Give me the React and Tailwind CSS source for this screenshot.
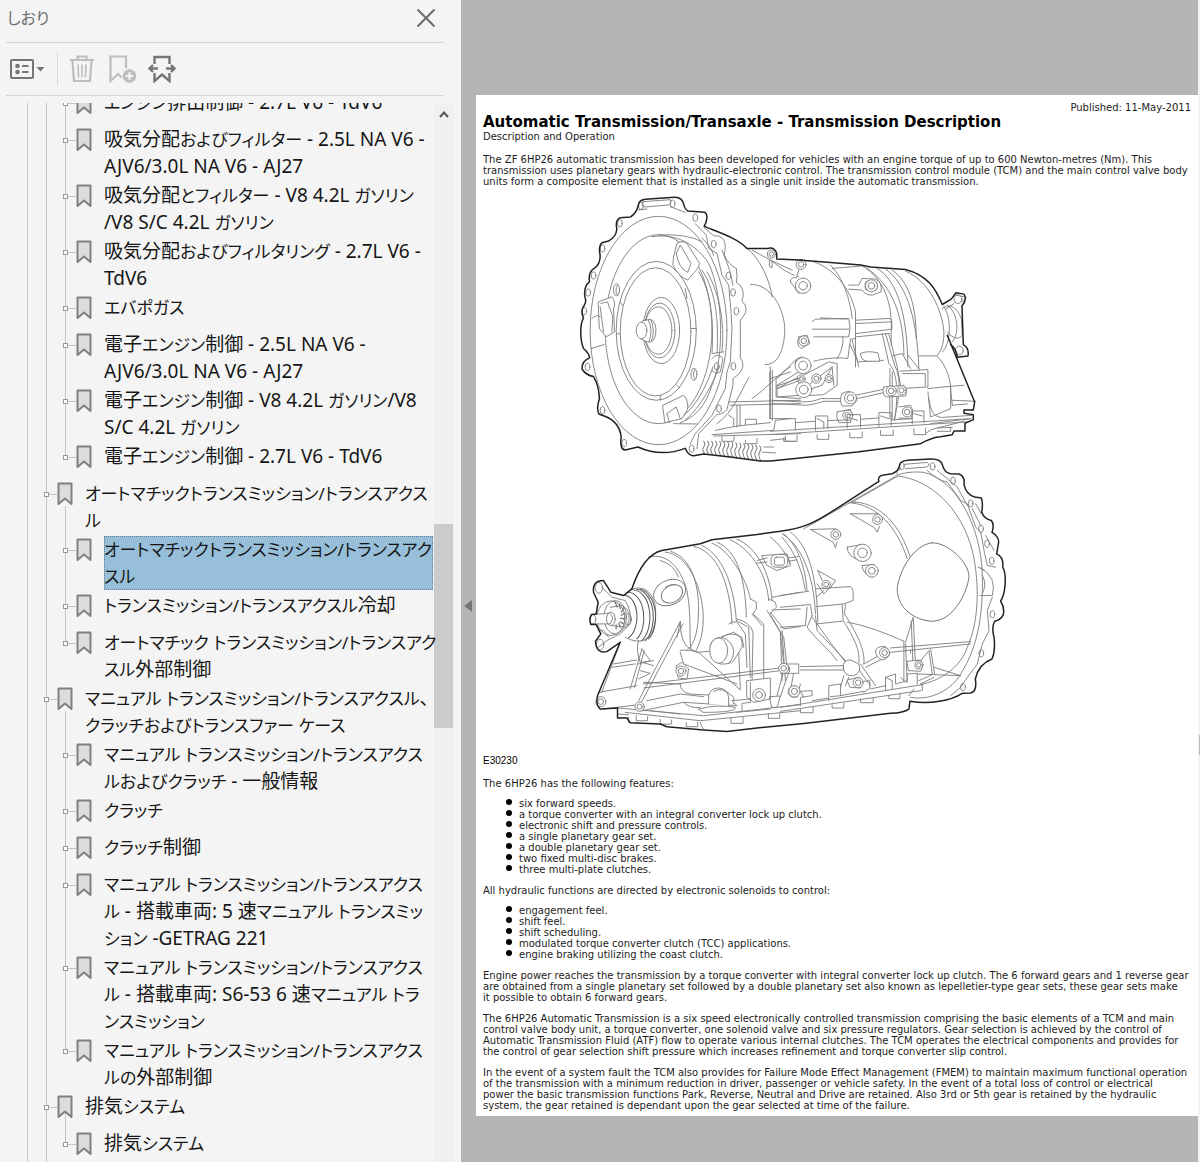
import { Fragment } from 'react';

const bookmarks = [
  {
    id: 'engine',
    children: [
      { lines: ['エンジン排出制御 - 2.7L V6 - TdV6'] },
      { lines: ['吸気分配およびフィルター - 2.5L NA V6 -', 'AJV6/3.0L NA V6 - AJ27'] },
      { lines: ['吸気分配とフィルター - V8 4.2L ガソリン', '/V8 S/C 4.2L ガソリン'] },
      { lines: ['吸気分配およびフィルタリング - 2.7L V6 -', 'TdV6'] },
      { lines: ['エバポガス'] },
      { lines: ['電子エンジン制御 - 2.5L NA V6 -', 'AJV6/3.0L NA V6 - AJ27'] },
      { lines: ['電子エンジン制御 - V8 4.2L ガソリン/V8', 'S/C 4.2L ガソリン'] },
      { lines: ['電子エンジン制御 - 2.7L V6 - TdV6'] },
    ],
  },
  {
    id: 'automatic',
    lines: ['オートマチックトランスミッション/トランスアクス', 'ル'],
    children: [
      { lines: ['オートマチックトランスミッション/トランスアク', 'スル'], selected: true },
      { lines: ['トランスミッション/トランスアクスル冷却'] },
      { lines: ['オートマチック トランスミッション/トランスアク', 'スル外部制御'] },
    ],
  },
  {
    id: 'manual',
    lines: ['マニュアル トランスミッション/トランスアクスル、', 'クラッチおよびトランスファー ケース'],
    children: [
      { lines: ['マニュアル トランスミッション/トランスアクス', 'ルおよびクラッチ - 一般情報'] },
      { lines: ['クラッチ'] },
      { lines: ['クラッチ制御'] },
      { lines: ['マニュアル トランスミッション/トランスアクス', 'ル - 搭載車両: 5 速マニュアル トランスミッ', 'ション -GETRAG 221'] },
      { lines: ['マニュアル トランスミッション/トランスアクス', 'ル - 搭載車両: S6-53 6 速マニュアル トラ', 'ンスミッション'] },
      { lines: ['マニュアル トランスミッション/トランスアクス', 'ルの外部制御'] },
    ],
  },
  {
    id: 'exhaust',
    lines: ['排気システム'],
    children: [{ lines: ['排気システム'] }],
  },
];

const features = [
  'six forward speeds.',
  'a torque converter with an integral converter lock up clutch.',
  'electronic shift and pressure controls.',
  'a single planetary gear set.',
  'a double planetary gear set.',
  'two fixed multi-disc brakes.',
  'three multi-plate clutches.',
];

const controls = [
  'engagement feel.',
  'shift feel.',
  'shift scheduling.',
  'modulated torque converter clutch (TCC) applications.',
  'engine braking utilizing the coast clutch.',
];

const Label = ({ text }) =>
  text.split(/([\u3040-\u30ff]+(?:[ /][\u3040-\u30ff]+)*)/).map((part, i) =>
    i % 2 ? <span key={i} className="text-[17px]">{part}</span> : <Fragment key={i}>{part}</Fragment>
  );

const BookmarkIcon = () => (
  <svg width="16" height="24" viewBox="0 0 16 24" className="shrink-0">
    <path d="M1.5 1.5h13v20.500L8 16.500 1.500 22z" fill="#dcdcdc" stroke="#808080" strokeWidth="2" strokeLinejoin="round" />
  </svg>
);

const Row = ({ item }) => (
  <div className="relative z-10 flex min-h-[37px] items-start pb-[2px]">
    <span className="absolute left-[2px] top-[14px] h-px w-[11px] bg-[#c4c4c4]" />
    <span className="relative mt-[12px] h-[5px] w-[5px] shrink-0 border border-[#999] bg-white" />
    <span className="ml-[8px] mt-[2px] shrink-0"><BookmarkIcon /></span>
    <a
      href="#"
      className={`ml-[12px] min-w-0 flex-1 whitespace-pre text-[19px] leading-[27px] text-[#161616] ${
        item.selected ? 'bg-[#98bfd9] outline-1 -outline-offset-1 outline-dotted outline-[#5d7f95]' : ''
      }`}
    >
      {item.lines.map((line) => (
        <span key={line} className="block"><Label text={line} /></span>
      ))}
    </a>
  </div>
);

const Branch = ({ node }) => (
  <li>
    {node.lines && <Row item={node} />}
    <ul className="ml-[19px]">
      {node.children.map((child, i) => (
        <li key={i} className="relative">
          {/* the first guide starts behind the parent's icon, the last one stops at its own node */}
          {i === 0 && node.lines && <span className="absolute left-[2px] -top-[30px] h-[30px] w-px bg-[#c4c4c4]" />}
          <span
            className={`absolute left-[2px] top-0 w-px bg-[#c4c4c4] ${
              i === node.children.length - 1 ? 'h-[14px]' : 'bottom-0'
            }`}
          />
          <Row item={child} />
        </li>
      ))}
    </ul>
  </li>
);

const Sidebar = () => (
  <aside className="relative z-10 flex w-[461px] shrink-0 flex-col bg-[#f4f4f4] font-['Noto_Sans','Noto_Sans_CJK_JP',sans-serif] [font-feature-settings:'palt']">
    <header className="ml-[6px] mr-[17px] flex h-[43px] items-center justify-between border-b border-[#d4d4d4] pb-[7px]">
      <h2 className="ml-px text-[16px] text-[#707070]">しおり</h2>
      <button aria-label="閉じる" className="mr-[8px]">
        <svg width="20" height="20" viewBox="0 0 20 20" fill="none" stroke="#6c6c6c" strokeWidth="2">
          <path d="M1.500 1.500l17 17M18.500 1.500l-17 17" />
        </svg>
      </button>
    </header>

    <div className="ml-[6px] mr-[17px] flex h-[53px] items-center border-b border-[#d4d4d4] pl-[3px]">
      <button aria-label="オプション">
        <svg width="36" height="22" viewBox="0 0 36 22" fill="none" stroke="#757575" strokeWidth="2">
          <rect x="2" y="2" width="22" height="18" rx="1" />
          <path d="M13 8h6.500M13 14h6.500" />
          <circle cx="8.500" cy="8" r="2.300" fill="#757575" stroke="none" />
          <circle cx="8.500" cy="14" r="2.300" fill="#757575" stroke="none" />
          <path d="M27.500 9h8l-4 4.500z" fill="#757575" stroke="none" />
        </svg>
      </button>
      <span className="ml-[12px] h-[34px] w-px bg-[#dadada]" />
      <button aria-label="削除" disabled className="ml-[11px]">
        <svg width="26" height="28" viewBox="0 0 26 28" fill="none" stroke="#bdbdbd" strokeWidth="2.200">
          <path d="M1 5h24M8.500 5V1.500h9V5M3.500 5.500L5 26h16l1.500-20.500" />
          <path d="M9 9.500l.6 13M13 9.500v13M17 9.500l-.6 13" strokeWidth="1.600" />
        </svg>
      </button>
      <button aria-label="追加" disabled className="ml-[14px]">
        <svg width="28" height="28" viewBox="0 0 28 28" fill="none" stroke="#bdbdbd" strokeWidth="2.200">
          <path d="M17 13V1.500H1.500V26L9 19l3.500 3.500" />
          <circle cx="20.500" cy="21" r="6.800" fill="#bdbdbd" stroke="none" />
          <path d="M20.500 17.200v7.600M16.700 21h7.600" stroke="#f4f4f4" />
        </svg>
      </button>
      <button aria-label="現在のしおり" className="ml-[11px]">
        <svg width="28" height="28" viewBox="0 0 28 28" fill="none" stroke="#757575" strokeWidth="2.400">
          <path d="M6.500 9V2h15v7M6.500 18v8l7.500-6.500 7.500 6.500v-8" />
          <path d="M10 13.500H2M18 13.500h8M5 10l-3.500 3.500L5 17M23 10l3.500 3.500L23 17" />
        </svg>
      </button>
    </div>

    <div className="mt-[7px] flex min-h-0 flex-1">
      <nav aria-label="しおり" className="ml-[27px] min-w-0 flex-1 overflow-y-clip border-l border-[#c8c8c8] pl-[16px]">
        <ul className="relative -mt-[14px] pr-px">
          <li aria-hidden="true" className="absolute inset-y-0 left-[2px] w-px bg-[#c4c4c4]" />
          {bookmarks.map((node) => <Branch key={node.id} node={node} />)}
        </ul>
      </nav>
      <div className="flex w-[20px] shrink-0 flex-col bg-[#f0f0f0]">
        <svg width="20" height="20" viewBox="0 0 20 20" fill="none" stroke="#555" strokeWidth="2">
          <path d="M6 14l4-4.500 4 4.500" />
        </svg>
        <span className="mt-[401px] h-[204px] w-[19px] bg-[#cbcbcb]" />
      </div>
      <span className="w-[7px] shrink-0" />
    </div>
  </aside>
);

const Holes = ({ at, rx = 7, ry = 11 }) =>
  at.map(([x, y]) => <ellipse key={`${x}-${y}`} cx={x} cy={y} rx={rx} ry={ry} />);

const Bosses = ({ at }) =>
  at.map(([x, y, r]) => (
    <g key={`${x}-${y}`} fill="#fff">
      <circle cx={x} cy={y} r={r} />
      <circle cx={x} cy={y} r={r * 0.55} />
    </g>
  ));

// Three-quarter view from the bell housing side
const FrontView = () => (
  <g transform="translate(570 185) scale(.3333)">
    <g transform="translate(600 0)">
      <path d="M0 225C35 250 45 262 85 275M130 230C190 250 240 310 255 380V545M180 240C210 270 235 320 245 400M270 240C330 270 365 340 362 430V480" />
      <path d="M185 250L270 243M290 250C350 290 400 370 400 510M320 250C370 280 410 360 412 545M345 252C400 290 440 380 445 555M365 255C415 290 437 360 437 460M405 258C480 290 515 380 520 440C520 480 510 500 498 512H445" />
      <path d="M125 410L135 402L235 400Q242 430 235 455L130 455M125 432L235 432M257 405L355 400Q364 400 364 412V432L257 445M257 415L362 410M217 455C220 480 210 505 200 520M150 398L230 402M257 455L355 445" />
      <path d="M255 460L240 462L232 520C200 515 160 520 130 528M245 465L265 545M240 480L262 530L340 525M335 445L355 535C380 560 385 620 372 705M345 445L372 540C395 580 385 640 372 700M355 445L380 545L390 600M358 550V700M365 560V703" />
      <path d="M365 512L395 505L420 550M412 510L445 550M388 558L472 553V605L388 610M396 565H464V602M472 610L540 603L540 670L480 695L472 620M498 512C530 540 540 590 540 610L545 660M540 603L580 600M545 645L615 648M475 640C480 690 500 698 520 696L605 690M545 660L590 656M480 715L600 700" />
      <path d="M515 370C540 350 560 370 572 400L575 450C565 465 545 460 530 440M520 365C545 400 540 480 515 500M528 370L550 355M530 360C560 380 570 440 545 470M555 330L580 335M572 350Q588 345 586 335" />
      <Holes at={[[562, 342], [566, 496]]} rx={12} ry={13} />
      <path d="M20 600L85 560M20 600V635L90 630M20 610L90 572M90 575L175 530L200 535V600L160 628L100 632M120 595L185 545L190 600M95 620L155 600L185 545M5 645L95 650Q130 650 150 640L210 640M5 655L110 660Q140 655 160 648L215 648M255 630L340 612M260 640L340 622" />
      <path d="M60 290Q58 275 78 278L85 255M60 290L85 325M235 300H265L275 280L315 282Q335 290 332 320L305 330Q285 330 275 315L235 312M270 505Q290 495 322 503L328 528H290Q270 525 270 505" fill="#fff" />
      <rect x="284" y="288" width="36" height="28" rx="8" fill="#fff" />
      <path d="M20 580L80 520M75 540Q70 520 95 515M85 455L110 450L118 475L92 490Q76 478 85 455M215 625Q240 610 250 630L260 645L245 662H215Q205 645 215 625M200 680L240 672Q248 690 240 712H205Q195 695 200 680M340 605L400 600Q412 615 405 632L345 635Q332 620 340 605M385 665L420 660Q432 680 420 700L385 698" fill="#fff" />
      <Bosses at={[[98, 302, 23], [92, 238, 15], [98, 541, 24], [100, 613, 24], [92, 581, 12], [138, 580, 14], [176, 580, 12], [100, 467, 15], [240, 638, 18], [232, 690, 15], [362, 617, 15], [393, 615, 14], [410, 680, 15], [303, 302, 18]]} />
      <path d="M0 738L600 700M0 748L585 710M0 700H75V735M135 735V692H172V730M230 728V688H270V725M325 724V682H362V720M425 716V677H460V712M75 712L135 708M172 706L230 704M270 702L325 698M362 704L425 700M0 765L45 760M45 752V768H80V750M140 748V762H175V746M238 742V757H275V740M330 736V750H368V734M430 730V748H465V728M465 745Q480 730 500 728L545 726M500 738H540V728M140 700L160 710V730M235 697L262 705M330 692L355 700M430 685L455 692" />
      <path d="M500 728L580 708M0 545V700" />
    </g>
    <ellipse cx="265" cy="436" rx="205" ry="342" />
    <ellipse cx="265" cy="432" rx="160" ry="283" />
    <ellipse cx="258" cy="437" rx="120" ry="208" />
    <ellipse cx="256" cy="440" rx="106" ry="192" />
    <path d="M245 155C300 145 370 165 415 235C460 330 462 520 425 600C400 680 360 700 330 712M265 150Q350 145 395 170M385 260C425 320 430 420 425 505L460 500M395 255C440 320 445 420 440 503M410 260C455 340 462 430 455 500M330 700C380 660 405 610 428 545M345 705C395 660 425 600 447 545M310 715L380 716" />
    <path d="M425 520Q440 500 458 520L450 560Q435 570 425 555" />
    <path d="M310 215L320 175Q335 165 350 175L388 235Q385 250 372 262L352 285Q325 275 308 240ZM318 205L330 180L362 235L352 262Q325 250 318 205M85 350L125 335Q138 350 130 372L133 440L108 455L88 430ZM92 355L112 350L128 395L125 440M90 365L100 440M65 400Q80 385 90 395M62 490L102 478M278 660L340 630Q355 645 352 672L335 700L285 712ZM290 685L318 665L330 700M290 685L298 712" fill="#fff" />
    <ellipse cx="273" cy="436" rx="55" ry="99" fill="#fff" />
    <ellipse cx="268" cy="436" rx="46" ry="82" />
    <ellipse cx="264" cy="436" rx="41" ry="71" />
    <path d="M215 408L240 402Q262 410 256 450Q250 475 232 470L212 462" fill="#fff" />
    <ellipse cx="214" cy="436" rx="16" ry="25" fill="#fff" />
    <path d="M234 404Q250 435 236 470M242 404Q256 435 244 468M345 310L350 340M150 350L158 362M140 445L150 447M270 630V645M320 600L328 608M362 430H378" />
    <ellipse cx="139" cy="314" rx="9" ry="18" />
    <ellipse cx="371" cy="567" rx="9" ry="18" />
    <path d="M142 300Q132 315 142 330M374 553Q364 567 374 581" />
    <path d="M402 128L430 152Q465 150 465 185L462 210Q475 240 498 250Q502 275 498 292Q522 305 518 335L515 348Q538 370 518 395L510 405V518Q528 540 505 567L488 580V600L470 672Q462 685 440 688L385 745L380 790" />
    <path d="M375 116L408 150L415 190L440 205L455 270L475 300L482 380L485 430L480 530L470 560L465 610L442 655L425 690L375 745L360 775M455 195L478 255L488 300M395 160Q420 180 430 210" />
    <path d="M218 50L300 44Q305 55 295 60L222 66Q212 60 218 50M205 75L230 72M300 65L345 82" />
    <Holes at={[[212, 62], [307, 56], [375, 98], [149, 115], [97, 190], [70, 271], [54, 322], [42, 378], [52, 545], [97, 675], [162, 773], [364, 790], [430, 177], [474, 272], [488, 322], [498, 378], [489, 543], [446, 670], [439, 543]]} />
    <path d="M530 190C570 220 600 290 605 335M540 298C600 295 645 370 643 440C640 500 620 540 585 538M545 195L600 225L665 255M597 225V245L605 248V228M536 576C510 620 490 680 440 715M660 545C630 560 600 600 545 640M598 560V700M606 555V705M617 580V635L690 640M620 610L690 585M620 602L690 578M600 580L660 560" />
    <path d="M475 650L690 645M480 660L690 655M500 660V725M509 660V722M435 735L500 722L600 712M425 748L610 735L615 705L660 700M525 718V702H558V716M455 755V768H490L492 752M525 765V775H560V760M430 752L690 745M640 758V768H675M580 785H610M575 800L615 803M475 690L490 700V720" />
    <path d="M400 768q7 8 0 17t4 20M412 768q7 8 0 17t4 22M424 768q7 8 0 17t4 24M436 768q7 8 0 17t4 26M448 768q7 8 0 17t4 27M460 770q7 8 0 17t4 27M472 770q7 8 0 17t4 28M484 770q7 8 0 17t4 29M496 772q7 8 0 17t4 29M508 773q7 8 0 17t4 29M520 775q7 8 0 17t4 29M532 777q7 8 0 17t4 29M544 778q7 8 0 17t4 29M556 780q7 8 0 17t4 29M568 782q7 8 0 17t4 29" strokeWidth="3" />
    <g stroke="#222" strokeWidth="4.500">
      <path d="M402 124C410 108 414 88 404 82L352 78Q342 70 341 60Q336 36 312 37L225 43Q205 46 204 62Q198 85 180 96L150 98Q134 106 140 132Q138 156 115 168L95 173Q84 184 90 212Q90 238 72 250Q54 260 58 290Q40 304 44 334Q50 350 42 361Q30 376 40 398C28 420 30 465 40 490Q58 505 58 518Q34 528 36 552Q48 570 70 574Q86 600 88 640Q78 670 86 686L104 693Q148 710 153 755Q148 792 165 794L203 785C250 806 300 806 345 789Q354 812 370 811L400 806L480 815L570 827H600L660 821L860 800L1050 775Q1085 755 1110 754L1145 748L1150 737H1183V714L1208 703V688L1180 684V674H1208L1212 650L1130 450" />
      <path d="M402 124C440 140 500 158 530 190H592Q612 185 619 205V222L685 225L780 232L870 240L900 246L1005 253C1070 270 1095 310 1115 358L1142 342L1156 323L1180 327Q1190 345 1174 362L1178 478Q1196 488 1192 512L1160 516Q1158 490 1140 478" />
    </g>
    <Bosses at={[[603, 207, 12]]} />
  </g>
);

// Three-quarter view from the output flange side
const RearView = () => (
  <g transform="translate(570 450) scale(.3333)">
    <path d="M235 320C290 305 330 350 350 420C365 500 355 560 362 595M285 305C350 310 390 400 398 480C402 540 390 580 375 603M300 302C360 320 380 390 384 450C388 530 375 580 350 600M330 515Q330 580 360 595L380 605L445 600" />
    <path d="M370 288C440 300 480 400 485 520M395 285C450 310 490 390 498 510M425 278C480 300 530 390 540 445M440 275C500 300 525 380 528 500M480 268C550 300 590 380 595 450M500 266C560 290 600 370 605 450M600 260Q640 290 660 340M640 250Q700 300 710 420" />
    <path d="M540 445L558 455V475L548 490L580 520V690M595 445L615 455L618 470L598 490L640 560L650 650M590 480L630 545L640 640M545 490L575 525M605 440L690 425M605 478L690 475M600 485L640 535L690 528M500 505Q540 515 548 545L545 690M498 510L535 530L540 680M475 520Q485 510 500 515L525 550L530 650" />
    <ellipse cx="298" cy="426" rx="50" ry="37" transform="rotate(-25 298 426)" />
    <ellipse cx="305" cy="430" rx="34" ry="25" transform="rotate(-30 305 430)" />
    <path d="M270 330Q310 340 325 380M285 410Q300 400 315 402" />
    <path d="M165 430Q190 405 220 415C260 430 265 500 245 545C230 580 190 575 165 560" fill="#fff" />
    <path d="M175 425C225 430 235 530 200 565M190 418C245 425 255 530 215 570M200 416C255 425 265 530 225 570M210 415C262 430 270 530 235 565M165 435C205 440 215 530 175 562" stroke="#555" strokeWidth="3" />
    <ellipse cx="122" cy="503" rx="42" ry="52" />
    <ellipse cx="135" cy="500" rx="34" ry="50" />
    <path d="M95 410L125 440L165 450Q185 480 180 520L150 550L110 570L85 590M85 540Q100 530 115 560M120 470L155 465Q190 480 170 530L125 525" />
    <path d="M135 455l6 14M148 460l2 14M160 472l-6 12M163 488l-10 6M163 505l-12-2M160 520l-10-6M150 530l-4-12M138 535l0-12" strokeWidth="4" />
    <path d="M68 492L118 488Q135 500 120 520L68 520" fill="#fff" />
    <ellipse cx="122" cy="505" rx="13" ry="20" />
    <ellipse cx="68" cy="506" rx="9" ry="14" />
    <Holes at={[[86, 412], [90, 582], [173, 506]]} rx={11} ry={16} />
    <path d="M205 570Q195 600 212 640M150 575L95 725M130 640L200 628M125 650L195 640M330 513L205 750M338 520L215 752M215 595L180 715M222 600L192 712M215 595L240 630L205 640M250 630L215 635L250 645M210 660L240 668L205 685M85 725L200 705M100 775L205 762M220 695L330 700M330 513L320 560" />
    <path d="M220 700L630 652M220 712L630 660M330 600Q350 595 385 605L510 718M330 605L340 640L500 700M330 700Q330 725 360 730L450 735M505 600L510 715M230 750L330 730L400 738M215 780L340 755L500 765M340 755Q360 775 390 770M385 775Q440 760 495 770Q500 785 400 785Z" />
    <path d="M420 585Q425 562 450 560L490 545Q520 560 515 590L490 630Q480 642 450 640Q418 630 420 585M455 560Q480 540 515 560L520 590M455 560Q485 570 490 600Q490 625 475 638M415 760V735Q420 712 445 712Q475 715 475 745V765M430 722Q455 705 490 740V760" fill="#fff" />
    <ellipse cx="445" cy="600" rx="27" ry="38" fill="#fff" />
    <path d="M318 645L335 635L355 655L350 685L325 682ZM530 690L600 682V745L550 755L530 740ZM540 695V745M485 750L540 745V755L515 758V780M485 750L500 765M598 738L630 736L620 770H605Z" fill="#fff" />
    <path d="M640 660L620 735M655 665L630 738M670 665L660 720M690 700L680 740M575 315L650 310L660 345L620 360L590 345ZM560 330L590 322M560 338L590 334M655 322L685 318M655 332L680 328" />
    <rect x="602" y="312" width="50" height="38" rx="14" fill="#fff" />
    <rect x="612" y="320" width="30" height="24" rx="6" />
    <path d="M145 772L400 795L690 762M165 785L390 810L690 780M390 815Q395 838 410 840M175 800V815M198 795V810H232V798M270 806V820H304V808M348 815V828H382V814M482 803V818H518V800M594 790V803H628V788M145 790L175 792M240 780L330 790M500 785L600 775" />
    <g transform="translate(630 0)">
      <path d="M70 235L345 78M215 155L352 77M355 77C450 90 540 170 575 300C600 410 592 520 560 590C540 650 480 690 420 702M350 75C360 68 400 62 430 66C530 90 600 230 605 370C608 500 590 600 530 685C490 735 430 748 390 740" />
      <path d="M455 277C500 275 565 335 565 378C560 430 515 512 455 512C405 510 350 475 350 415C355 360 400 282 455 277Z" stroke="#666" />
      <path d="M215 158C290 165 350 230 380 325M225 155C300 160 360 225 388 318M205 158L225 155M5 250C60 280 100 370 105 490M30 245C80 280 110 370 112 515M5 260Q60 320 75 420" />
      <path d="M90 237L165 235M90 237L158 275L165 292L170 275M210 190L290 190M210 190L282 232L290 245L297 228M200 290L245 282M200 290Q200 320 240 330M245 345L280 342M245 345Q245 370 275 380M112 360L165 390L150 412M112 360L125 390M110 400L130 430L150 410" />
      <Bosses at={[[166, 252, 15], [291, 207, 15], [246, 307, 26], [274, 361, 19], [137, 402, 13]]} />
      <path d="M105 415L210 408Q220 412 218 450L190 460L108 468M108 440L130 420M0 435L85 422M0 470L90 462L95 495M108 520L185 512M80 470L75 525L0 530M95 495L80 530C110 570 140 590 170 630M105 495L110 540L200 635M95 500C140 560 150 580 200 640M185 462L188 510C220 560 240 600 235 635M195 462L192 490C230 550 255 600 250 640M200 515C260 525 320 550 370 572M375 575L398 500L405 650M392 510L398 660M370 572V690M375 580L380 695" />
      <path d="M330 592L570 573M330 605L570 580M390 598V608M250 640L300 612M255 650L305 625M400 655L445 600L455 670M450 595L462 670M460 650L540 675M410 670L540 675M60 648L190 645M60 658L190 658M240 640L285 705M230 650L270 705M190 675L180 710M205 680L195 705M5 540L15 690M0 545L5 690" />
      <path d="M188 650Q188 628 210 628L235 640Q245 665 220 675Q190 678 188 650M285 600Q290 585 315 588L328 605Q325 625 305 628Q285 620 285 600M380 632L420 628Q432 645 420 662L385 660ZM20 640L55 640V668L20 668M0 642Q25 635 28 655T0 668M200 688L235 680Q250 695 240 712L210 710Z" fill="#fff" />
      <Bosses at={[[312, 606, 15], [415, 643, 12], [233, 696, 15], [40, 723, 17]]} />
      <path d="M0 770L425 702M0 782L420 720M425 700V720M60 765V740L95 735V720L60 722L70 740M145 750V705L180 700V735L150 738M250 725L268 712V690L250 692M315 720V680L345 670V700L380 690V670L410 668V700M315 680L335 690V715M360 680L375 695M60 775V786H98V770M155 762V772H190V758M240 745V756H278V742M325 735V744H358V730M95 750L145 742M180 735L250 722M270 715L315 705M420 700L460 680M415 690L455 672M385 735L400 715" />
      <path d="M370 42L440 36Q450 45 438 50L375 55M350 75Q345 60 360 55M440 60Q470 90 500 95L540 150L560 160L585 230L600 245L612 310L620 345L645 350M600 352Q650 380 635 435H598M592 350L610 358M605 375Q620 400 605 430M635 440L620 480L625 540L605 580L590 640L560 680L540 710L510 735M615 255L640 300M470 60L530 110L560 165M575 175L600 225M585 160L602 190" />
      <Holes at={[[364, 47], [456, 48], [517, 91], [570, 159], [601, 235], [619, 280], [633, 331], [635, 491], [602, 608], [547, 709]]} />
    </g>
    <Bosses at={[[332, 661, 15], [566, 733, 19], [208, 768, 14], [92, 753, 15], [672, 722, 17], [640, 653, 15]]} />
    <g stroke="#222" strokeWidth="4.500">
      <path d="M185 415C200 370 225 312 275 300L390 280L425 268L560 252L630 242C700 235 740 212 790 180L925 93Q920 76 940 74L965 70Q985 62 988 42Q990 32 1010 30L1080 26Q1112 25 1116 45Q1122 68 1140 70L1165 71Q1184 78 1180 102Q1186 132 1212 140L1232 143Q1238 158 1233 185Q1240 206 1262 210Q1272 222 1264 246Q1284 258 1284 275L1278 310Q1300 320 1296 350C1308 370 1306 425 1290 452Q1302 470 1298 492Q1290 508 1272 512Q1262 530 1270 560Q1275 600 1264 625Q1224 640 1214 685Q1220 722 1200 727L1175 728C1140 750 1080 762 1018 752L1015 775Q1000 786 960 788L700 818L560 832L470 842L400 838L290 828L270 820L180 816L170 802H142V772" />
      <path d="M142 772L90 775Q76 765 82 735L150 575L110 603Q78 610 76 572L92 550L78 522H62Q56 506 64 492L78 490L84 455L70 425Q66 390 100 390L122 425L160 435L185 415" />
    </g>
  </g>
);

const TransmissionDrawing = () => (
  <svg viewBox="483 190 707 562" className="block w-full" role="img" aria-label="6HP26" fill="none" stroke="#7c7c7c" strokeWidth="2.700" strokeLinejoin="round" strokeLinecap="round">
    <FrontView />
    <RearView />
  </svg>
);

const BulletList = ({ items }) => (
  <ul className="mt-[9px] mb-[10px] pl-[23px]">
    {items.map((item) => (
      <li key={item} className="flex items-start gap-[7px]">
        <span className="mt-px h-[6px] w-[6px] shrink-0 rounded-full bg-black" />
        {item}
      </li>
    ))}
  </ul>
);

const Page = () => (
  <article className="mt-[95px] mr-[2px] ml-[15px] flex-1 bg-white px-[7px] pt-[7px] pb-[5px] text-[10px] leading-[11px] text-[#1c1c1c] font-['DejaVu_Sans',sans-serif]">
    <p className="text-right">Published: 11-May-2011</p>
    <h1 className="pt-px text-[15px] font-bold leading-[17px] text-black">
      Automatic Transmission/Transaxle - Transmission Description
    </h1>
    <p>Description and Operation</p>
    <p className="mt-[12px]">
      The ZF 6HP26 automatic transmission has been developed for vehicles with an engine torque of up to 600 Newton-metres (Nm). This<br />
      transmission uses planetary gears with hydraulic-electronic control. The transmission control module (TCM) and the main control valve body<br />
      units form a composite element that is installed as a single unit inside the automatic transmission.
    </p>
    <figure className="mt-[3px]">
      <TransmissionDrawing />
      <figcaption className="mt-[2px] text-black font-['Liberation_Sans',sans-serif]">E30230</figcaption>
    </figure>
    <p className="mt-[12px]">The 6HP26 has the following features:</p>
    <BulletList items={features} />
    <p>All hydraulic functions are directed by electronic solenoids to control:</p>
    <BulletList items={controls} />
    <p>
      Engine power reaches the transmission by a torque converter with integral converter lock up clutch. The 6 forward gears and 1 reverse gear<br />
      are obtained from a single planetary set followed by a double planetary set also known as lepelletier-type gear sets, these gear sets make<br />
      it possible to obtain 6 forward gears.
    </p>
    <p className="mt-[10px]">
      The 6HP26 Automatic Transmission is a six speed electronically controlled transmission comprising the basic elements of a TCM and main<br />
      control valve body unit, a torque converter, one solenoid valve and six pressure regulators. Gear selection is achieved by the control of<br />
      Automatic Transmission Fluid (ATF) flow to operate various internal clutches. The TCM operates the electrical components and provides for<br />
      the control of gear selection shift pressure which increases refinement and torque converter slip control.
    </p>
    <p className="mt-[10px]">
      In the event of a system fault the TCM also provides for Failure Mode Effect Management (FMEM) to maintain maximum functional operation<br />
      of the transmission with a minimum reduction in driver, passenger or vehicle safety. In the event of a total loss of control or electrical<br />
      power the basic transmission functions Park, Reverse, Neutral and Drive are retained. Also 3rd or 5th gear is retained by the hydraulic<br />
      system, the gear retained is dependant upon the gear selected at time of the failure.
    </p>
  </article>
);

export default function App() {
  return (
    <div className="flex h-screen overflow-hidden bg-[#b5b5b5]">
      <Sidebar />
      <main className="relative flex min-w-0 flex-1 items-start">
        <button aria-label="パネルを閉じる" className="absolute left-[3px] top-[600px]">
          <svg width="8" height="12" viewBox="0 0 8 12"><path d="M8 0v12L0 6z" fill="#757575" /></svg>
        </button>
        <Page />
        <div className="absolute inset-y-0 right-0 w-[2px] bg-[#f3f3f3]">
          <span className="absolute right-0 top-[735px] h-[20px] w-px bg-[#bdbdbd]" />
        </div>
      </main>
    </div>
  );
}
